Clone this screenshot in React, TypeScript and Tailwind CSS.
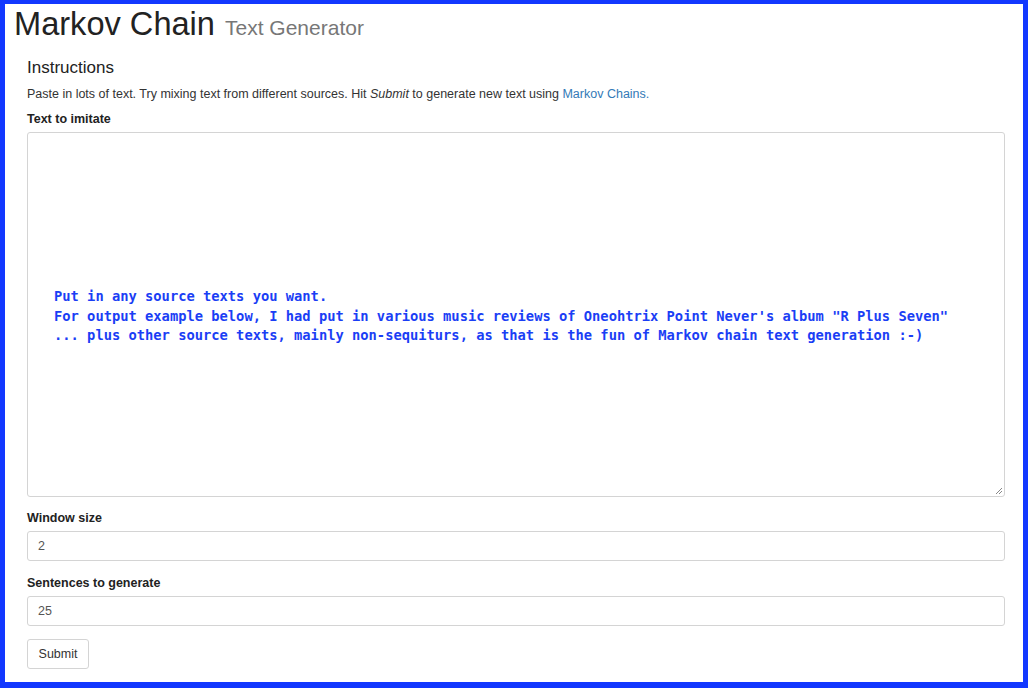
import React from "react";

export default function App() {
  const sans = { fontFamily: '"Liberation Sans", Arial, Helvetica, sans-serif' };
  return (
    <div
      className="w-[1028px] h-[688px] box-border border-[#1238ff] border-solid border-l-[5px] border-r-[5px] border-t-[4px] border-b-[6px] bg-white overflow-hidden text-[#333]"
      style={sans}
    >
      <div className="pt-[4px] pl-[9px] h-[36px] leading-[32px] whitespace-nowrap">
        <span className="text-[32.6px] text-[#222]">Markov Chain</span>
        <span className="ml-[10px] text-[21px] text-[#777]">Text Generator</span>
      </div>
      <div className="pl-[22px] pr-[18px]">
        <div className="mt-[18px] text-[17px] leading-[20px] text-[#222]">Instructions</div>
        <p className="mt-[8px] text-[12.5px] leading-[17px]">
          Paste in lots of text. Try mixing text from different sources. Hit <i>Submit</i> to generate new text using{" "}
          <span className="text-[#337ab7]">Markov Chains.</span>
        </p>
        <div className="mt-[8px] text-[12.5px] leading-[17px] font-bold text-[#222]">Text to imitate</div>
        <div className="relative mt-[4px] h-[365px] border border-[#d4d4d4] rounded-[3px] flex items-center pl-[26px] pt-[4px]">
          <div
            className="text-[13.75px] leading-[19.7px] font-bold text-[#1a3ef5] whitespace-pre"
            style={{ fontFamily: '"DejaVu Sans Mono", "Liberation Mono", monospace' }}
          >
            {`Put in any source texts you want.
For output example below, I had put in various music reviews of Oneohtrix Point Never's album "R Plus Seven"
... plus other source texts, mainly non-sequiturs, as that is the fun of Markov chain text generation :-)`}
          </div>
          <svg className="absolute right-[2px] bottom-[2px]" width="7" height="7" viewBox="0 0 7 7">
            <line x1="1" y1="7" x2="7" y2="1" stroke="#888" strokeWidth="1" />
            <line x1="4" y1="7" x2="7" y2="4" stroke="#888" strokeWidth="1" />
          </svg>
        </div>
        <div className="mt-[13px] text-[12.5px] leading-[17px] font-bold text-[#222]">Window size</div>
        <div className="mt-[4px] h-[30px] border border-[#d4d4d4] rounded-[3px] flex items-center pl-[10px] text-[12.5px] text-[#555]">
          2
        </div>
        <div className="mt-[14px] text-[12.5px] leading-[17px] font-bold text-[#222]">Sentences to generate</div>
        <div className="mt-[4px] h-[30px] border border-[#d4d4d4] rounded-[3px] flex items-center pl-[10px] text-[12.5px] text-[#555]">
          25
        </div>
        <button
          className="mt-[13px] w-[62px] h-[30px] border border-[#d4d4d4] rounded-[3px] bg-white text-[12.5px] text-[#333]"
          style={sans}
        >
          Submit
        </button>
      </div>
    </div>
  );
}
